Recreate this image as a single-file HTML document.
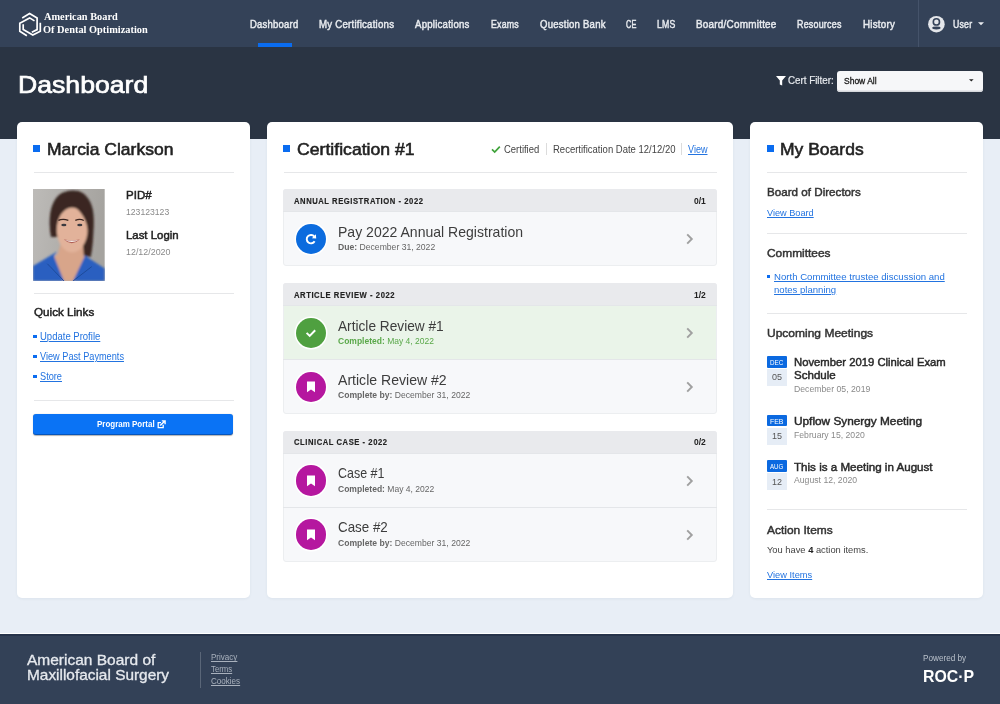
<!DOCTYPE html>
<html><head><meta charset="utf-8"><style>
html,body{margin:0;padding:0;}
body{width:1000px;height:704px;position:relative;overflow:hidden;background:#e8eef6;font-family:"Liberation Sans",sans-serif;}
.t{position:absolute;white-space:nowrap;line-height:normal;transform-origin:0 0;}
.r{position:absolute;}
</style></head><body>
<div class="r" style="left:0.00px;top:0.00px;width:1000.00px;height:47.00px;background:#344258"></div>
<div class="r" style="left:0.00px;top:47.00px;width:1000.00px;height:92.00px;background:#2a3443"></div>
<div class="r" style="left:0.00px;top:632.80px;width:1000.00px;height:1.60px;background:#ffffff"></div>
<div class="r" style="left:0.00px;top:634.40px;width:1000.00px;height:1.20px;background:#26334a"></div>
<div class="r" style="left:0.00px;top:635.60px;width:1000.00px;height:70.00px;background:#334157"></div>
<svg class="r" style="left:16px;top:9.8px" width="28" height="30" viewBox="0 0 28 30">
<g fill="none" stroke="#ffffff" stroke-width="1.7" stroke-linejoin="miter" stroke-linecap="butt">
<polyline points="6.2,7.9 13.6,3.6 21.1,7.9 21.1,19.6 15.8,22.2"/>
<polyline points="18.5,10.9 13.6,7.9 3.8,13.2 3.8,21.3 10.9,25.8"/>
<polyline points="7.2,14.3 7.2,19.6 16.8,25.1 24.3,21.3 24.3,12.8"/>
</g></svg>
<div class="t" style="left:43.75px;top:11.00px;font-size:10.60px;font-family:'Liberation Serif', serif;transform:scaleX(0.9749);color:#ffffff;"><span style="font-weight:700;color:#ffffff">American Board</span></div>
<div class="t" style="left:43.25px;top:23.50px;font-size:10.60px;font-family:'Liberation Serif', serif;transform:scaleX(0.9776);color:#ffffff;"><span style="font-weight:700;color:#ffffff">Of Dental Optimization</span></div>
<div class="t" style="left:249.90px;top:18.80px;font-size:10.30px;font-family:'Liberation Sans', sans-serif;transform:scaleX(0.9218);color:#e8ebef;letter-spacing:0.25px;-webkit-text-stroke:0.45px currentColor;"><span style="font-weight:400;color:#e8ebef">Dashboard</span></div>
<div class="t" style="left:319.30px;top:18.80px;font-size:10.30px;font-family:'Liberation Sans', sans-serif;transform:scaleX(0.9363);color:#e8ebef;letter-spacing:0.25px;-webkit-text-stroke:0.45px currentColor;"><span style="font-weight:400;color:#e8ebef">My Certifications</span></div>
<div class="t" style="left:415.30px;top:18.80px;font-size:10.30px;font-family:'Liberation Sans', sans-serif;transform:scaleX(0.9331);color:#e8ebef;letter-spacing:0.25px;-webkit-text-stroke:0.45px currentColor;"><span style="font-weight:400;color:#e8ebef">Applications</span></div>
<div class="t" style="left:491.00px;top:18.80px;font-size:10.30px;font-family:'Liberation Sans', sans-serif;transform:scaleX(0.8523);color:#e8ebef;letter-spacing:0.25px;-webkit-text-stroke:0.45px currentColor;"><span style="font-weight:400;color:#e8ebef">Exams</span></div>
<div class="t" style="left:539.90px;top:18.80px;font-size:10.30px;font-family:'Liberation Sans', sans-serif;transform:scaleX(0.9278);color:#e8ebef;letter-spacing:0.25px;-webkit-text-stroke:0.45px currentColor;"><span style="font-weight:400;color:#e8ebef">Question Bank</span></div>
<div class="t" style="left:626.30px;top:18.80px;font-size:10.30px;font-family:'Liberation Sans', sans-serif;transform:scaleX(0.7148);color:#e8ebef;letter-spacing:0.25px;-webkit-text-stroke:0.45px currentColor;"><span style="font-weight:400;color:#e8ebef">CE</span></div>
<div class="t" style="left:657.30px;top:18.80px;font-size:10.30px;font-family:'Liberation Sans', sans-serif;transform:scaleX(0.8479);color:#e8ebef;letter-spacing:0.25px;-webkit-text-stroke:0.45px currentColor;"><span style="font-weight:400;color:#e8ebef">LMS</span></div>
<div class="t" style="left:696.30px;top:18.80px;font-size:10.30px;font-family:'Liberation Sans', sans-serif;transform:scaleX(0.9611);color:#e8ebef;letter-spacing:0.25px;-webkit-text-stroke:0.45px currentColor;"><span style="font-weight:400;color:#e8ebef">Board/Committee</span></div>
<div class="t" style="left:797.30px;top:18.80px;font-size:10.30px;font-family:'Liberation Sans', sans-serif;transform:scaleX(0.8663);color:#e8ebef;letter-spacing:0.25px;-webkit-text-stroke:0.45px currentColor;"><span style="font-weight:400;color:#e8ebef">Resources</span></div>
<div class="t" style="left:862.90px;top:18.80px;font-size:10.30px;font-family:'Liberation Sans', sans-serif;transform:scaleX(0.9478);color:#e8ebef;letter-spacing:0.25px;-webkit-text-stroke:0.45px currentColor;"><span style="font-weight:400;color:#e8ebef">History</span></div>
<div class="r" style="left:257.50px;top:43.00px;width:34.00px;height:4.00px;background:#0a6cf0"></div>
<div class="r" style="left:918.00px;top:0.00px;width:1.00px;height:47.00px;background:#45536a"></div>
<svg class="r" style="left:927px;top:15px" width="19" height="19" viewBox="0 0 19 19">
<circle cx="9.4" cy="9.2" r="8.3" fill="#e4e6ea"/>
<circle cx="9.4" cy="6.9" r="3.1" fill="none" stroke="#344258" stroke-width="1.6"/>
<ellipse cx="9.4" cy="13" rx="4.2" ry="1.4" fill="#344258"/>
</svg>
<div class="t" style="left:953.20px;top:18.60px;font-size:10.30px;font-family:'Liberation Sans', sans-serif;transform:scaleX(0.8489);color:#e8ebef;letter-spacing:0.25px;-webkit-text-stroke:0.45px currentColor;"><span style="font-weight:400;color:#e8ebef">User</span></div>
<svg class="r" style="left:977.5px;top:21.5px" width="6" height="4" viewBox="0 0 6 4"><polygon points="0,0.3 6,0.3 3,3.3" fill="#e8ebef"/></svg>
<div class="t" style="left:17.80px;top:71.30px;font-size:24.00px;font-family:'Liberation Sans', sans-serif;transform:scaleX(1.1090);color:#ffffff;-webkit-text-stroke:0.70px currentColor;"><span style="font-weight:400;color:#ffffff">Dashboard</span></div>
<svg class="r" style="left:775.5px;top:76px" width="10" height="10" viewBox="0 0 10 10">
<polygon points="0,0 10,0 6.2,4.6 6.2,9.4 3.8,8.4 3.8,4.6" fill="#ffffff"/></svg>
<div class="t" style="left:787.80px;top:74.30px;font-size:10.60px;font-family:'Liberation Sans', sans-serif;transform:scaleX(0.9242);color:#e8ebef;-webkit-text-stroke:0.20px currentColor;"><span style="font-weight:400;color:#e8ebef">Cert Filter:</span></div>
<div class="r" style="left:836.60px;top:70.60px;width:146.30px;height:21.90px;background:#f6f7f9;border-radius:3px;box-shadow:inset 0 -1.5px 0 #d5d7db"></div>
<div class="t" style="left:844.40px;top:76.20px;font-size:8.80px;font-family:'Liberation Sans', sans-serif;transform:scaleX(0.9659);color:#1a1a1a;-webkit-text-stroke:0.30px currentColor;"><span style="font-weight:400;color:#1a1a1a">Show All</span></div>
<svg class="r" style="left:968.5px;top:78.8px" width="5" height="4" viewBox="0 0 5 4"><polygon points="0,0.3 4.6,0.3 2.3,2.6" fill="#222"/></svg>
<div class="r" style="left:16.67px;top:122.00px;width:233.33px;height:475.80px;background:#fff;border-radius:5px;box-shadow:0 1px 3px rgba(40,60,90,.06)"></div>
<div class="r" style="left:266.67px;top:122.00px;width:466.67px;height:475.80px;background:#fff;border-radius:5px;box-shadow:0 1px 3px rgba(40,60,90,.06)"></div>
<div class="r" style="left:750.00px;top:122.00px;width:233.33px;height:475.80px;background:#fff;border-radius:5px;box-shadow:0 1px 3px rgba(40,60,90,.06)"></div>
<div class="r" style="left:33.20px;top:144.50px;width:7.00px;height:7.00px;background:#0a6cf0"></div>
<div class="t" style="left:46.60px;top:139.60px;font-size:16.60px;font-family:'Liberation Sans', sans-serif;transform:scaleX(1.0542);color:#222222;-webkit-text-stroke:0.55px currentColor;"><span style="font-weight:400;color:#222222">Marcia Clarkson</span></div>
<div class="r" style="left:33.50px;top:171.50px;width:200.00px;height:1.00px;background:#e6e7e9"></div>
<svg class="r" style="left:33.3px;top:189.1px" width="71.7" height="91.9" viewBox="0 0 72 92" preserveAspectRatio="none">
<defs><filter id="bl" x="-20%" y="-20%" width="140%" height="140%"><feGaussianBlur stdDeviation="0.9"/></filter>
<filter id="bl2" x="-20%" y="-20%" width="140%" height="140%"><feGaussianBlur stdDeviation="0.45"/></filter>
<linearGradient id="bg" x1="0" y1="0" x2="1" y2="0.2"><stop offset="0" stop-color="#bdbbb8"/><stop offset="1" stop-color="#a5a39f"/></linearGradient></defs>
<rect width="72" height="92" fill="url(#bg)"/>
<g filter="url(#bl)">
<path d="M18,48 C15,30 17,14 26,6 C32,1 44,0 50,4 C57,9 61,18 61,30 C61,45 60,58 58,68 L48,66 L46,50 L24,48 Z" fill="#3a2822"/>
<polygon points="28,54 50,54 51,66 59,77.7 40.3,92 31,92 14.4,74.8 25,65" fill="#d8a58a"/>
<ellipse cx="39.3" cy="41" rx="15.5" ry="22.5" fill="#e2b29a"/>
<path d="M18.5,42 L23.5,26 C27,19 31,17 33.8,16.6 C36,16.4 38,16.6 40.3,17.3 C43,18.5 44.5,20 46,21.6 C48.5,24.5 50.5,27 51.8,30 C53.3,33 54.2,36 54.7,39.6 L60.5,40 C61,30 60,18 54,10 C48,3 36,2 28,6 C21,10 18,20 18.5,42 Z" fill="#3a2822"/>
<polygon points="0,77 24.5,62.5 21,67 31,92 0,92" fill="#2a5fc0"/>
<polygon points="50.4,65.5 72,79.5 72,92 40.3,92 51.8,67.6" fill="#2a5fc0"/>
</g>
<g filter="url(#bl2)">
<path d="M25.5,31.5 Q30,29.5 35.5,31.5" fill="none" stroke="#3a2620" stroke-width="1.3"/>
<path d="M42.5,31.5 Q47,29.5 51,31.5" fill="none" stroke="#3a2620" stroke-width="1.3"/>
<ellipse cx="31" cy="36" rx="2.6" ry="1.2" fill="#3b3a40"/>
<ellipse cx="47" cy="36" rx="2.6" ry="1.2" fill="#3b3a40"/>
<path d="M31,50.5 Q39,58 47,50.5 Q39,52 31,50.5 Z" fill="#b05e55"/>
<path d="M32,51 Q39,55 46,51 Q39,52 32,51 Z" fill="#f7f2ee"/>
<path d="M14.4,74.8 L31,92 M59,77.7 L40.3,92" fill="none" stroke="#1d4a9a" stroke-width="1"/>
</g>
</svg>
<div class="t" style="left:125.60px;top:189.40px;font-size:10.60px;font-family:'Liberation Sans', sans-serif;transform:scaleX(1.0870);color:#222222;-webkit-text-stroke:0.45px currentColor;"><span style="font-weight:400;color:#222222">PID#</span></div>
<div class="t" style="left:125.60px;top:207.20px;font-size:9.30px;font-family:'Liberation Sans', sans-serif;transform:scaleX(0.9280);color:#8a8a8a;"><span style="font-weight:400;color:#8a8a8a">123123123</span></div>
<div class="t" style="left:125.60px;top:229.10px;font-size:10.60px;font-family:'Liberation Sans', sans-serif;transform:scaleX(1.0757);color:#222222;-webkit-text-stroke:0.45px currentColor;"><span style="font-weight:400;color:#222222">Last Login</span></div>
<div class="t" style="left:125.60px;top:246.80px;font-size:9.30px;font-family:'Liberation Sans', sans-serif;transform:scaleX(0.9560);color:#8a8a8a;"><span style="font-weight:400;color:#8a8a8a">12/12/2020</span></div>
<div class="r" style="left:33.50px;top:292.50px;width:200.00px;height:1.00px;background:#e6e7e9"></div>
<div class="t" style="left:33.70px;top:306.10px;font-size:11.20px;font-family:'Liberation Sans', sans-serif;transform:scaleX(1.0415);color:#222222;-webkit-text-stroke:0.45px currentColor;"><span style="font-weight:400;color:#222222">Quick Links</span></div>
<div class="r" style="left:33.30px;top:334.60px;width:3.60px;height:3.60px;background:#0a6cf0"></div>
<div class="t" style="left:40.10px;top:329.80px;font-size:10.60px;font-family:'Liberation Sans', sans-serif;transform:scaleX(0.8980);color:#2273e0;text-decoration:underline;text-decoration-thickness:0.9px;text-underline-offset:1px;"><span style="font-weight:400;color:#2273e0">Update Profile</span></div>
<div class="r" style="left:33.30px;top:354.80px;width:3.60px;height:3.60px;background:#0a6cf0"></div>
<div class="t" style="left:40.10px;top:350.00px;font-size:10.60px;font-family:'Liberation Sans', sans-serif;transform:scaleX(0.8660);color:#2273e0;text-decoration:underline;text-decoration-thickness:0.9px;text-underline-offset:1px;"><span style="font-weight:400;color:#2273e0">View Past Payments</span></div>
<div class="r" style="left:33.30px;top:374.80px;width:3.60px;height:3.60px;background:#0a6cf0"></div>
<div class="t" style="left:40.10px;top:370.00px;font-size:10.60px;font-family:'Liberation Sans', sans-serif;transform:scaleX(0.8679);color:#2273e0;text-decoration:underline;text-decoration-thickness:0.9px;text-underline-offset:1px;"><span style="font-weight:400;color:#2273e0">Store</span></div>
<div class="r" style="left:33.50px;top:399.50px;width:200.00px;height:1.00px;background:#e6e7e9"></div>
<div class="r" style="left:33.40px;top:413.80px;width:199.70px;height:21.70px;background:#0a73f5;border-radius:3px;box-shadow:inset 0 -1px 0 rgba(0,30,80,.35), 0 0.5px 1px rgba(0,0,0,.3)"></div>
<div class="t" style="left:97.20px;top:419.00px;font-size:9.00px;font-family:'Liberation Sans', sans-serif;transform:scaleX(0.8862);color:#ffffff;"><span style="font-weight:700;color:#ffffff">Program Portal</span></div>
<svg class="r" style="left:157.3px;top:419.5px" width="9" height="9" viewBox="0 0 9 9">
<path d="M6.2,4.8 V7.6 H1.2 V2.6 H4" fill="none" stroke="#fff" stroke-width="1.3"/>
<path d="M3.2,5.6 L7.6,1.2 M4.8,0.9 H8.1 V4.2" fill="none" stroke="#fff" stroke-width="1.4"/></svg>
<div class="r" style="left:283.40px;top:144.50px;width:7.00px;height:7.00px;background:#0a6cf0"></div>
<div class="t" style="left:297.00px;top:139.60px;font-size:16.60px;font-family:'Liberation Sans', sans-serif;transform:scaleX(1.0632);color:#222222;-webkit-text-stroke:0.55px currentColor;"><span style="font-weight:400;color:#222222">Certification #1</span></div>
<div class="r" style="left:283.50px;top:171.50px;width:433.30px;height:1.00px;background:#e6e7e9"></div>
<svg class="r" style="left:491px;top:145px" width="10" height="9" viewBox="0 0 10 9">
<path d="M1,4.3 L3.7,7 L8.8,1.6" fill="none" stroke="#3fa33a" stroke-width="1.7"/></svg>
<div class="t" style="left:504.25px;top:144.00px;font-size:10.00px;font-family:'Liberation Sans', sans-serif;transform:scaleX(0.9463);color:#444;"><span style="font-weight:400;color:#444">Certified</span></div>
<div class="r" style="left:545.50px;top:142.50px;width:1.00px;height:12.00px;background:#dcdcdc"></div>
<div class="t" style="left:552.50px;top:144.00px;font-size:10.00px;font-family:'Liberation Sans', sans-serif;transform:scaleX(0.9500);color:#444;"><span style="font-weight:400;color:#444">Recertification Date 12/12/20</span></div>
<div class="r" style="left:681.00px;top:142.50px;width:1.00px;height:12.00px;background:#dcdcdc"></div>
<div class="t" style="left:687.50px;top:144.00px;font-size:10.00px;font-family:'Liberation Sans', sans-serif;transform:scaleX(0.9070);color:#2273e0;text-decoration:underline;text-decoration-thickness:0.9px;text-underline-offset:1px;"><span style="font-weight:400;color:#2273e0">View</span></div>
<div class="r" style="left:283.30px;top:189.40px;width:433.40px;height:77.00px;background:#f7f8fa;border:1px solid #eceef0;border-radius:3px;box-sizing:border-box;overflow:hidden"></div>
<div class="r" style="left:283.30px;top:189.40px;width:433.40px;height:22.00px;background:#e9eaed;border-radius:3px 3px 0 0"></div>
<div class="r" style="left:283.30px;top:211.40px;width:433.40px;height:1.00px;background:#e4e6e9"></div>
<div class="t" style="left:294.00px;top:195.80px;font-size:8.40px;font-family:'Liberation Sans', sans-serif;transform:scaleX(0.9128);color:#222;letter-spacing:0.60px;-webkit-text-stroke:0.15px currentColor;"><span style="font-weight:700;color:#222">ANNUAL REGISTRATION - 2022</span></div>
<div class="t" style="left:693.70px;top:195.80px;font-size:8.60px;font-family:'Liberation Sans', sans-serif;transform:scaleX(0.9874);color:#222;"><span style="font-weight:700;color:#222">0/1</span></div>
<div class="r" style="left:295.50px;top:223.90px;width:30.40px;height:30.40px;background:#0b6bde;border-radius:50%;box-shadow:0 0 0 1.5px #fff"></div>
<svg class="r" style="left:303.70px;top:232.10px" width="14" height="14" viewBox="0 0 14 14">
<path d="M10.6,9.2 A4.2,4.2 0 1 1 10.3,4.6" fill="none" stroke="#fff" stroke-width="1.9"/>
<polygon points="11.9,2.2 12.2,6.6 7.9,6.3" fill="#fff"/></svg>
<div class="t" style="left:337.90px;top:223.70px;font-size:14.10px;font-family:'Liberation Sans', sans-serif;transform:scaleX(0.9965);color:#3d3d3d;"><span style="font-weight:400;color:#3d3d3d">Pay 2022 Annual Registration</span></div>
<div class="t" style="left:337.90px;top:242.40px;font-size:9.20px;font-family:'Liberation Sans', sans-serif;transform:scaleX(0.9374);color:#666;"><span style="font-weight:700;color:#666">Due:</span><span style="font-weight:400;color:#666"> December 31, 2022</span></div>
<svg class="r" style="left:684.8px;top:233.10px" width="9" height="12" viewBox="0 0 9 12">
<path d="M2.2,1.3 L6.8,6 L2.2,10.7" fill="none" stroke="#a0a0a0" stroke-width="1.9"/></svg>
<div class="r" style="left:283.30px;top:283.20px;width:433.40px;height:131.00px;background:#f7f8fa;border:1px solid #eceef0;border-radius:3px;box-sizing:border-box;overflow:hidden"></div>
<div class="r" style="left:283.30px;top:283.20px;width:433.40px;height:22.00px;background:#e9eaed;border-radius:3px 3px 0 0"></div>
<div class="r" style="left:283.30px;top:305.20px;width:433.40px;height:1.00px;background:#e4e6e9"></div>
<div class="t" style="left:294.00px;top:289.60px;font-size:8.40px;font-family:'Liberation Sans', sans-serif;transform:scaleX(0.9164);color:#222;letter-spacing:0.60px;-webkit-text-stroke:0.15px currentColor;"><span style="font-weight:700;color:#222">ARTICLE REVIEW - 2022</span></div>
<div class="t" style="left:693.70px;top:289.60px;font-size:8.60px;font-family:'Liberation Sans', sans-serif;transform:scaleX(0.9874);color:#222;"><span style="font-weight:700;color:#222">1/2</span></div>
<div class="r" style="left:284.30px;top:306.20px;width:431.40px;height:53.00px;background:#eaf4e9"></div>
<div class="r" style="left:295.50px;top:317.70px;width:30.40px;height:30.40px;background:#4fa040;border-radius:50%;box-shadow:0 0 0 1.5px #fff"></div>
<svg class="r" style="left:303.70px;top:325.90px" width="14" height="14" viewBox="0 0 14 14">
<path d="M2.6,6.9 L5.7,9.9 L11.2,4.3" fill="none" stroke="#fff" stroke-width="2"/></svg>
<div class="t" style="left:337.90px;top:317.50px;font-size:14.10px;font-family:'Liberation Sans', sans-serif;transform:scaleX(0.9706);color:#3d3d3d;"><span style="font-weight:400;color:#3d3d3d">Article Review #1</span></div>
<div class="t" style="left:337.90px;top:336.20px;font-size:9.20px;font-family:'Liberation Sans', sans-serif;transform:scaleX(0.9258);color:#5aa84a;"><span style="font-weight:700;color:#5aa84a">Completed:</span><span style="font-weight:400;color:#5aa84a"> May 4, 2022</span></div>
<svg class="r" style="left:684.8px;top:326.90px" width="9" height="12" viewBox="0 0 9 12">
<path d="M2.2,1.3 L6.8,6 L2.2,10.7" fill="none" stroke="#a0a0a0" stroke-width="1.9"/></svg>
<div class="r" style="left:283.30px;top:359.20px;width:433.40px;height:1.00px;background:#e4e6e9"></div>
<div class="r" style="left:295.50px;top:371.70px;width:30.40px;height:30.40px;background:#b5179f;border-radius:50%;box-shadow:0 0 0 1.5px #fff"></div>
<svg class="r" style="left:303.70px;top:379.90px" width="14" height="14" viewBox="0 0 14 14">
<polygon points="3,1.5 11,1.5 11,12.3 7,9.5 3,12.3" fill="#fff"/></svg>
<div class="t" style="left:337.90px;top:371.50px;font-size:14.10px;font-family:'Liberation Sans', sans-serif;transform:scaleX(0.9982);color:#3d3d3d;"><span style="font-weight:400;color:#3d3d3d">Article Review #2</span></div>
<div class="t" style="left:337.90px;top:390.20px;font-size:9.20px;font-family:'Liberation Sans', sans-serif;transform:scaleX(0.9349);color:#666;"><span style="font-weight:700;color:#666">Complete by:</span><span style="font-weight:400;color:#666"> December 31, 2022</span></div>
<svg class="r" style="left:684.8px;top:380.90px" width="9" height="12" viewBox="0 0 9 12">
<path d="M2.2,1.3 L6.8,6 L2.2,10.7" fill="none" stroke="#a0a0a0" stroke-width="1.9"/></svg>
<div class="r" style="left:283.30px;top:430.80px;width:433.40px;height:131.00px;background:#f7f8fa;border:1px solid #eceef0;border-radius:3px;box-sizing:border-box;overflow:hidden"></div>
<div class="r" style="left:283.30px;top:430.80px;width:433.40px;height:22.00px;background:#e9eaed;border-radius:3px 3px 0 0"></div>
<div class="r" style="left:283.30px;top:452.80px;width:433.40px;height:1.00px;background:#e4e6e9"></div>
<div class="t" style="left:294.00px;top:437.20px;font-size:8.40px;font-family:'Liberation Sans', sans-serif;transform:scaleX(0.9115);color:#222;letter-spacing:0.60px;-webkit-text-stroke:0.15px currentColor;"><span style="font-weight:700;color:#222">CLINICAL CASE - 2022</span></div>
<div class="t" style="left:693.70px;top:437.20px;font-size:8.60px;font-family:'Liberation Sans', sans-serif;transform:scaleX(0.9874);color:#222;"><span style="font-weight:700;color:#222">0/2</span></div>
<div class="r" style="left:295.50px;top:465.30px;width:30.40px;height:30.40px;background:#b5179f;border-radius:50%;box-shadow:0 0 0 1.5px #fff"></div>
<svg class="r" style="left:303.70px;top:473.50px" width="14" height="14" viewBox="0 0 14 14">
<polygon points="3,1.5 11,1.5 11,12.3 7,9.5 3,12.3" fill="#fff"/></svg>
<div class="t" style="left:337.90px;top:465.10px;font-size:14.10px;font-family:'Liberation Sans', sans-serif;transform:scaleX(0.8838);color:#3d3d3d;"><span style="font-weight:400;color:#3d3d3d">Case #1</span></div>
<div class="t" style="left:337.90px;top:483.80px;font-size:9.20px;font-family:'Liberation Sans', sans-serif;transform:scaleX(0.9287);color:#666;"><span style="font-weight:700;color:#666">Completed:</span><span style="font-weight:400;color:#666"> May 4, 2022</span></div>
<svg class="r" style="left:684.8px;top:474.50px" width="9" height="12" viewBox="0 0 9 12">
<path d="M2.2,1.3 L6.8,6 L2.2,10.7" fill="none" stroke="#a0a0a0" stroke-width="1.9"/></svg>
<div class="r" style="left:283.30px;top:506.80px;width:433.40px;height:1.00px;background:#e4e6e9"></div>
<div class="r" style="left:295.50px;top:519.30px;width:30.40px;height:30.40px;background:#b5179f;border-radius:50%;box-shadow:0 0 0 1.5px #fff"></div>
<svg class="r" style="left:303.70px;top:527.50px" width="14" height="14" viewBox="0 0 14 14">
<polygon points="3,1.5 11,1.5 11,12.3 7,9.5 3,12.3" fill="#fff"/></svg>
<div class="t" style="left:337.90px;top:519.10px;font-size:14.10px;font-family:'Liberation Sans', sans-serif;transform:scaleX(0.9486);color:#3d3d3d;"><span style="font-weight:400;color:#3d3d3d">Case #2</span></div>
<div class="t" style="left:337.90px;top:537.80px;font-size:9.20px;font-family:'Liberation Sans', sans-serif;transform:scaleX(0.9349);color:#666;"><span style="font-weight:700;color:#666">Complete by:</span><span style="font-weight:400;color:#666"> December 31, 2022</span></div>
<svg class="r" style="left:684.8px;top:528.50px" width="9" height="12" viewBox="0 0 9 12">
<path d="M2.2,1.3 L6.8,6 L2.2,10.7" fill="none" stroke="#a0a0a0" stroke-width="1.9"/></svg>
<div class="r" style="left:767.00px;top:145.00px;width:6.50px;height:6.50px;background:#0a6cf0"></div>
<div class="t" style="left:780.00px;top:139.60px;font-size:16.60px;font-family:'Liberation Sans', sans-serif;transform:scaleX(1.0548);color:#222222;-webkit-text-stroke:0.55px currentColor;"><span style="font-weight:400;color:#222222">My Boards</span></div>
<div class="r" style="left:767.00px;top:172.00px;width:200.00px;height:1.00px;background:#e6e7e9"></div>
<div class="t" style="left:767.00px;top:186.40px;font-size:11.30px;font-family:'Liberation Sans', sans-serif;transform:scaleX(1.0302);color:#333;-webkit-text-stroke:0.45px currentColor;"><span style="font-weight:400;color:#333">Board of Directors</span></div>
<div class="t" style="left:767.00px;top:206.70px;font-size:9.80px;font-family:'Liberation Sans', sans-serif;transform:scaleX(0.9349);color:#2273e0;text-decoration:underline;text-decoration-thickness:0.9px;text-underline-offset:1px;"><span style="font-weight:400;color:#2273e0">View Board</span></div>
<div class="r" style="left:767.00px;top:232.50px;width:200.00px;height:1.00px;background:#e6e7e9"></div>
<div class="t" style="left:767.00px;top:246.80px;font-size:11.30px;font-family:'Liberation Sans', sans-serif;transform:scaleX(1.0547);color:#333;-webkit-text-stroke:0.45px currentColor;"><span style="font-weight:400;color:#333">Committees</span></div>
<div class="r" style="left:766.60px;top:275.00px;width:3.40px;height:3.20px;background:#0a6cf0"></div>
<div class="t" style="left:773.80px;top:270.80px;font-size:9.80px;font-family:'Liberation Sans', sans-serif;transform:scaleX(0.9799);color:#2273e0;text-decoration:underline;text-decoration-thickness:0.9px;text-underline-offset:1px;"><span style="font-weight:400;color:#2273e0">North Committee trustee discussion and</span></div>
<div class="t" style="left:773.80px;top:284.00px;font-size:9.80px;font-family:'Liberation Sans', sans-serif;transform:scaleX(0.9757);color:#2273e0;text-decoration:underline;text-decoration-thickness:0.9px;text-underline-offset:1px;"><span style="font-weight:400;color:#2273e0">notes planning</span></div>
<div class="r" style="left:767.00px;top:313.00px;width:200.00px;height:1.00px;background:#e6e7e9"></div>
<div class="t" style="left:767.10px;top:327.40px;font-size:11.30px;font-family:'Liberation Sans', sans-serif;transform:scaleX(1.0626);color:#333;-webkit-text-stroke:0.45px currentColor;"><span style="font-weight:400;color:#333">Upcoming Meetings</span></div>
<div class="r" style="left:766.80px;top:356.10px;width:19.90px;height:11.50px;background:#0b69e0;border-radius:1px"></div>
<div class="r" style="left:766.80px;top:369.00px;width:19.90px;height:16.90px;background:#e6edf6"></div>
<div class="t" style="left:770.00px;top:357.90px;font-size:7.80px;font-family:'Liberation Sans', sans-serif;transform:scaleX(0.8085);color:#fff;"><span style="font-weight:400;color:#fff">DEC</span></div>
<div class="t" style="left:771.60px;top:371.40px;font-size:9.80px;font-family:'Liberation Sans', sans-serif;transform:scaleX(0.9174);color:#555;"><span style="font-weight:400;color:#555">05</span></div>
<div class="t" style="left:793.50px;top:356.40px;font-size:10.80px;font-family:'Liberation Sans', sans-serif;transform:scaleX(1.0451);color:#2a2a2a;-webkit-text-stroke:0.45px currentColor;"><span style="font-weight:400;color:#2a2a2a">November 2019 Clinical Exam</span></div>
<div class="t" style="left:793.50px;top:369.20px;font-size:10.80px;font-family:'Liberation Sans', sans-serif;transform:scaleX(1.0704);color:#2a2a2a;-webkit-text-stroke:0.45px currentColor;"><span style="font-weight:400;color:#2a2a2a">Schdule</span></div>
<div class="t" style="left:793.50px;top:383.70px;font-size:9.20px;font-family:'Liberation Sans', sans-serif;transform:scaleX(0.9455);color:#8a8a8a;"><span style="font-weight:400;color:#8a8a8a">December 05, 2019</span></div>
<div class="r" style="left:766.80px;top:414.90px;width:19.90px;height:11.50px;background:#0b69e0;border-radius:1px"></div>
<div class="r" style="left:766.80px;top:427.80px;width:19.90px;height:16.90px;background:#e6edf6"></div>
<div class="t" style="left:770.00px;top:416.70px;font-size:7.80px;font-family:'Liberation Sans', sans-serif;transform:scaleX(0.8779);color:#fff;"><span style="font-weight:400;color:#fff">FEB</span></div>
<div class="t" style="left:771.60px;top:430.20px;font-size:9.80px;font-family:'Liberation Sans', sans-serif;transform:scaleX(0.9174);color:#555;"><span style="font-weight:400;color:#555">15</span></div>
<div class="t" style="left:793.50px;top:415.20px;font-size:10.80px;font-family:'Liberation Sans', sans-serif;transform:scaleX(1.0944);color:#2a2a2a;-webkit-text-stroke:0.45px currentColor;"><span style="font-weight:400;color:#2a2a2a">Upflow Synergy Meeting</span></div>
<div class="t" style="left:793.50px;top:429.70px;font-size:9.20px;font-family:'Liberation Sans', sans-serif;transform:scaleX(0.9428);color:#8a8a8a;"><span style="font-weight:400;color:#8a8a8a">February 15, 2020</span></div>
<div class="r" style="left:766.80px;top:460.30px;width:19.90px;height:11.50px;background:#0b69e0;border-radius:1px"></div>
<div class="r" style="left:766.80px;top:473.20px;width:19.90px;height:16.90px;background:#e6edf6"></div>
<div class="t" style="left:770.00px;top:462.10px;font-size:7.80px;font-family:'Liberation Sans', sans-serif;transform:scaleX(0.7870);color:#fff;"><span style="font-weight:400;color:#fff">AUG</span></div>
<div class="t" style="left:771.60px;top:475.60px;font-size:9.80px;font-family:'Liberation Sans', sans-serif;transform:scaleX(0.9174);color:#555;"><span style="font-weight:400;color:#555">12</span></div>
<div class="t" style="left:793.50px;top:460.60px;font-size:10.80px;font-family:'Liberation Sans', sans-serif;transform:scaleX(1.0740);color:#2a2a2a;-webkit-text-stroke:0.45px currentColor;"><span style="font-weight:400;color:#2a2a2a">This is a Meeting in August</span></div>
<div class="t" style="left:793.50px;top:475.10px;font-size:9.20px;font-family:'Liberation Sans', sans-serif;transform:scaleX(0.9433);color:#8a8a8a;"><span style="font-weight:400;color:#8a8a8a">August 12, 2020</span></div>
<div class="r" style="left:767.00px;top:509.00px;width:200.00px;height:1.00px;background:#e6e7e9"></div>
<div class="t" style="left:767.00px;top:523.60px;font-size:11.30px;font-family:'Liberation Sans', sans-serif;transform:scaleX(1.0571);color:#333;-webkit-text-stroke:0.45px currentColor;"><span style="font-weight:400;color:#333">Action Items</span></div>
<div class="t" style="left:767.00px;top:544.40px;font-size:9.60px;font-family:'Liberation Sans', sans-serif;transform:scaleX(0.9718);color:#444;"><span style="font-weight:400;color:#444">You have </span><span style="font-weight:700;color:#222">4</span><span style="font-weight:400;color:#444"> action items.</span></div>
<div class="t" style="left:767.00px;top:569.30px;font-size:9.80px;font-family:'Liberation Sans', sans-serif;transform:scaleX(0.9466);color:#2273e0;text-decoration:underline;text-decoration-thickness:0.9px;text-underline-offset:1px;"><span style="font-weight:400;color:#2273e0">View Items</span></div>
<div class="t" style="left:27.20px;top:651.50px;font-size:14.30px;font-family:'Liberation Sans', sans-serif;transform:scaleX(1.0840);color:#e6e9ee;-webkit-text-stroke:0.30px currentColor;"><span style="font-weight:400;color:#e6e9ee">American Board of</span></div>
<div class="t" style="left:27.20px;top:667.00px;font-size:14.30px;font-family:'Liberation Sans', sans-serif;transform:scaleX(1.0769);color:#e6e9ee;-webkit-text-stroke:0.30px currentColor;"><span style="font-weight:400;color:#e6e9ee">Maxillofacial Surgery</span></div>
<div class="r" style="left:200.00px;top:651.50px;width:1.00px;height:36.00px;background:#5a6678"></div>
<div class="t" style="left:210.80px;top:652.40px;font-size:8.70px;font-family:'Liberation Sans', sans-serif;transform:scaleX(0.9263);color:#a9b1bd;text-decoration:underline;text-decoration-thickness:0.9px;text-underline-offset:1px;"><span style="font-weight:400;color:#a9b1bd">Privacy</span></div>
<div class="t" style="left:210.80px;top:664.40px;font-size:8.70px;font-family:'Liberation Sans', sans-serif;transform:scaleX(0.8945);color:#a9b1bd;text-decoration:underline;text-decoration-thickness:0.9px;text-underline-offset:1px;"><span style="font-weight:400;color:#a9b1bd">Terms</span></div>
<div class="t" style="left:210.80px;top:676.40px;font-size:8.70px;font-family:'Liberation Sans', sans-serif;transform:scaleX(0.9285);color:#a9b1bd;text-decoration:underline;text-decoration-thickness:0.9px;text-underline-offset:1px;"><span style="font-weight:400;color:#a9b1bd">Cookies</span></div>
<div class="t" style="left:923.40px;top:652.60px;font-size:8.70px;font-family:'Liberation Sans', sans-serif;transform:scaleX(0.9402);color:#b9c0ca;"><span style="font-weight:400;color:#b9c0ca">Powered by</span></div>
<div class="t" style="left:922.60px;top:667.40px;font-size:16.50px;font-family:'Liberation Sans', sans-serif;transform:scaleX(0.9595);color:#ffffff;"><span style="font-weight:700;color:#ffffff">ROC·P</span></div>
</body></html>
